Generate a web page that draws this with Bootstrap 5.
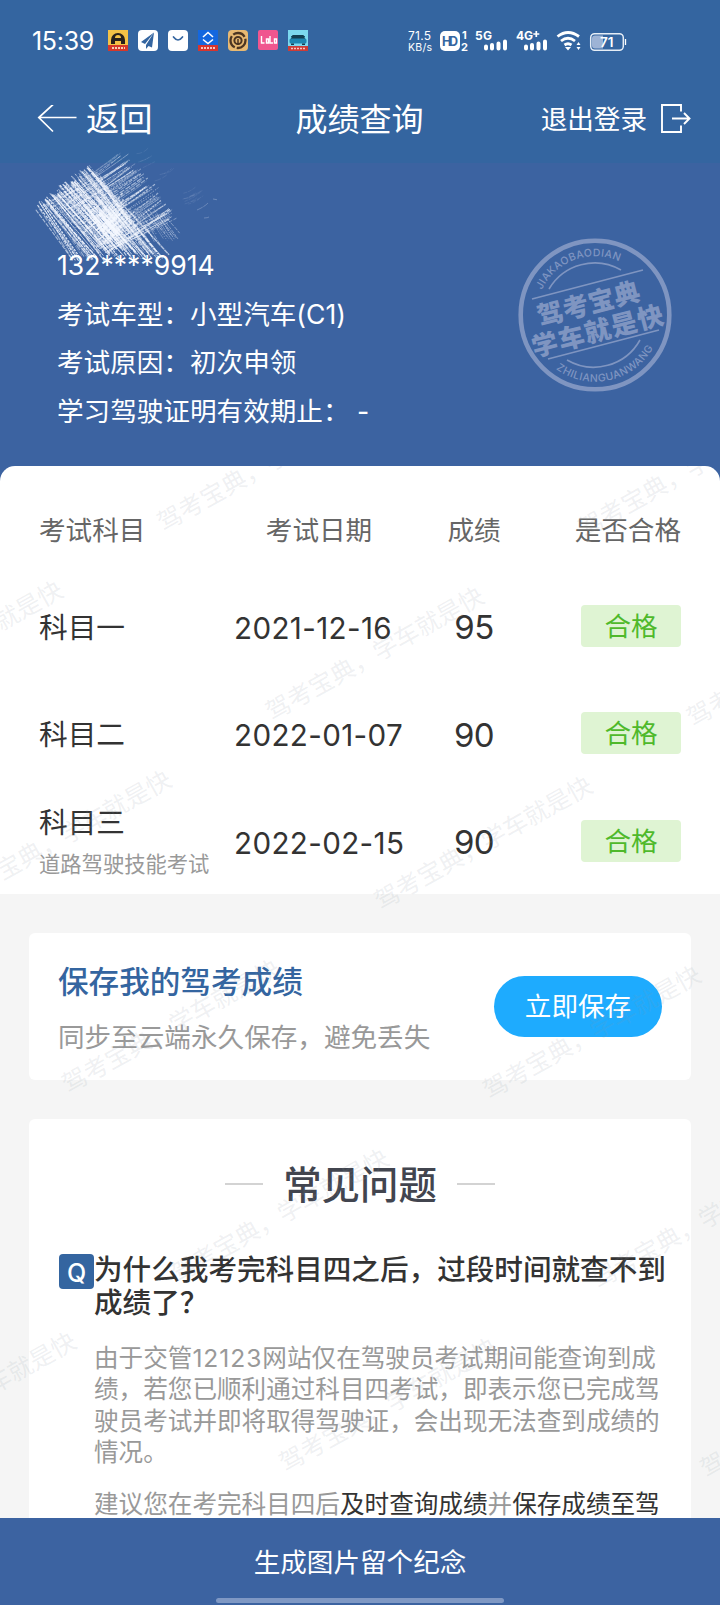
<!DOCTYPE html>
<html lang="zh-CN">
<head>
<meta charset="utf-8">
<meta name="viewport" content="width=device-width, initial-scale=1">
<title>成绩查询</title>
<link rel="stylesheet" href="https://cdn.jsdelivr.net/npm/bootstrap@5.3.0/dist/css/bootstrap.min.css">
<style>
  body { font-family: Inter, "Noto Sans CJK SC", sans-serif; background: #f5f5f5; color: #333; font-size: 26.6px; }
  .phone { width: 720px; height: 1605px; }
  .topbar { background: #3465a0; height: 163px; }
  .status { height: 82px; padding-left: 32px; }
  .clock { font-size: 25px; width: 75px; letter-spacing: -.3px; line-height: 1; }
  .titlebar { height: 76px; padding: 0 29px 0 37px; }
  .back-box, .exit-box { width: 200px; }
  .page-name { width: 254px; padding-right: 9px; }
  .back-label { font-size: 33.3px; margin-left: 9px; }
  .page-name { font-size: 32px; }
  .profile { background: #3c63a1; height: 320px; padding: 78px 57px 0; margin-bottom: -17px; }
  .profile p { line-height: 48.6px; height: 48.6px; }
  .scribble { left: 20px; top: -20px; }
  .stamp { left: 515px; top: 72px; }
  .scores { height: 428px; border-radius: 15px 15px 0 0; padding: 0 39px; }
  .score-row { display: grid; grid-template-columns: 195px 170px 140px 1fr; align-items: center; height: 107.5px; font-size: 28.7px; color: #333; }
  .score-head { height: 107.5px; padding-top: 23px; font-size: 26.6px; color: #666; }
  .score-date { font-size: 29.6px; letter-spacing: .35px; white-space: nowrap; padding-top: 1px; }
  .score-num { font-size: 33px; text-align: center; letter-spacing: -.6px; padding-top: 1px; }
  .sub-note { font-size: 21.3px; color: #999; line-height: 32px; white-space: nowrap; margin-top: 1px; }
  .subject { line-height: 48px; margin-top: -5px; }
  .pass { width: 100px; height: 42px; line-height: 42px; border-radius: 4px; background: #dff4d3; color: #4fb92b; font-size: 26.6px; margin-top: -3px; }
  .panel { background: #fff; margin: 0 29px; border-radius: 6px; }
  .save-panel { margin-top: 39px; height: 147px; padding: 0 29px; }
  .save-title { font-size: 30.6px; color: #3465a0; line-height: 40px; font-weight: 500; margin-top: 6px; }
  .save-note { color: #999; line-height: 40px; margin-top: 15px; }
  .save-btn { width: 168px; height: 61px; border-radius: 31px; background: #1eabfe; color: #fff; font-size: 26.6px; border: 0; padding: 0; }
  .faq { margin-top: 39px; padding: 39px 30px 0 30px; height: 500px; }
  .faq-title { font-size: 38.4px; color: #42454f; font-weight: 500; line-height: 54px; gap: 20px; }
  .faq-title i { width: 38px; height: 2px; background: #d3d3d3; margin-top: -3px; }
  .qa { margin-top: 41px; }
  .q-mark { width: 35px; height: 35px; border-radius: 4px; background: #3465a0; color: #fff; font-size: 25px; font-weight: 500; line-height: 38px; flex: none; margin-top: 1px; }
  .question { font-size: 28.6px; line-height: 33.3px; font-weight: 500; margin-bottom: 23px; white-space: nowrap; }
  .answer { font-size: 24.6px; line-height: 31.6px; color: #999; margin-bottom: 20px; white-space: nowrap; }
  .answer b { font-weight: 400; color: #333; }
  .site-no { letter-spacing: .95px; }
  .bottombar { height: 87px; background: #3c63a1; color: #fff; }
  .bottombar .label-text { line-height: 88px; }
  .home-pill { left: 216px; bottom: 2px; width: 288px; height: 5px; border-radius: 3px; background: #7f98c4; }
  .watermark { left: 0; top: 466px; pointer-events: none; }
</style>
</head>
<body>
<div class="phone position-relative overflow-hidden d-flex flex-column">
  <header class="topbar text-white flex-shrink-0">
    <div class="status d-flex align-items-center">
      <span class="clock flex-shrink-0">15:39</span>
      <svg class="flex-shrink-0" width="610" height="30" viewBox="107 26 610 30" font-family="Inter, sans-serif">
        <g>
          <rect x="108" y="30" width="20" height="21" fill="#f3c246"/><path d="M111 44v-4a7 7 0 0 1 14 0v4h-4v-3h-6v3z" fill="#27211c"/><path d="M115 38a3 3 0 0 1 6 0z" fill="#f3c246"/><rect x="108" y="45" width="20" height="6" fill="#d5382a"/><path d="M112 48h13" stroke="#f6d0b4" stroke-width="2" stroke-dasharray="2 1"/>
          <rect x="138" y="30" width="20" height="21" rx="4" fill="#fff"/><path d="M154 32.500L141 42l4 2zM154 32.500L146 45v4l2.500-3 3.500 1.500z" fill="#3465a0"/>
          <rect x="168" y="30" width="20" height="21" rx="4" fill="#fff"/><path d="M173.500 37q4.500 6 9 0" fill="none" stroke="#3465a0" stroke-width="1.700" stroke-linecap="round"/>
          <rect x="198" y="30" width="20" height="21" fill="#1467df"/><path d="M203 37l5-4.500 5 4.500M203 39.500l5 4 5-4" stroke="#fff" stroke-width="1.600" fill="none"/><rect x="198" y="45" width="20" height="6" fill="#d7352e"/><path d="M201 48h14" stroke="#f8c4bd" stroke-width="2" stroke-dasharray="2 1"/>
          <rect x="228" y="30" width="20" height="21" rx="4" fill="#e8b972"/><circle cx="238" cy="40.500" r="7.500" fill="none" stroke="#4c3522" stroke-width="2.300" stroke-dasharray="13 2"/><circle cx="238" cy="40.500" r="3.600" fill="none" stroke="#4c3522" stroke-width="2"/><path d="M238 39v6" stroke="#4c3522" stroke-width="1.500"/>
          <rect x="258" y="30" width="20" height="20" rx="2" fill="#f0568f"/><path d="M261.500 36v7h3M270 36v7h3M266.500 39v4h2v-4zM274.500 39v4h2v-4z" stroke="#fff" stroke-width="1.400" fill="none"/>
          <rect x="288" y="30" width="20" height="21" fill="#7bd8ee"/><path d="M291 36h14v1h-14z" fill="#1a5e76"/><path d="M292.500 35h11l2 4.500h-15z" fill="#123f52"/><rect x="289.500" y="38.500" width="17" height="5" rx="1.500" fill="#1d86b0"/><path d="M291 43.500h3v1.500h-3zM302 43.500h3v1.500h-3z" fill="#123f52"/><rect x="288" y="46" width="20" height="5" fill="#cd3c36"/><path d="M291 48.500h14" stroke="#f8c4bd" stroke-width="1.500" stroke-dasharray="2 1"/>
        </g>
        <g fill="#fff">
          <text x="408" y="40" font-size="12" textLength="23">71.5</text>
          <text x="408" y="51" font-size="10.500" textLength="24">KB/s</text>
          <rect x="440" y="31" width="20" height="20" rx="5"/>
          <text x="442" y="45.500" font-size="12.500" font-weight="700" fill="#3465a0" textLength="16">HD</text>
          <text x="462" y="39" font-size="11" font-weight="700">1</text>
          <text x="461" y="50.500" font-size="11" font-weight="700">2</text>
          <text x="475" y="40" font-size="12" font-weight="700" textLength="17">5G</text>
          <text x="516" y="40" font-size="12" font-weight="700" textLength="17">4G</text>
          <path d="M536.300 31v6M533.300 34h6" stroke="#fff" stroke-width="1.700"/>
          <path d="M486 46.500v2M492 45v3.500M498.500 43.500v5M505 41.500v7M526 46.500v2M532 45v3.500M538.500 43.500v5M545 41.500v7" stroke="#fff" stroke-width="4" stroke-linecap="round"/>
          <path d="M557.500 36.500q10.500-8 21.500 0M561 41q7-5.500 14 0M564.500 45q3.500-2.500 7 0" fill="none" stroke="#fff" stroke-width="2.800"/>
          <path d="M565 47h6l-3 3.500zM576.500 45l2-3 2 3zM576.500 47h4l-2 3z"/>
          <rect x="590.700" y="33.700" width="32.600" height="16.600" rx="4" fill="none" stroke="#e5edf6" stroke-width="1.500"/>
          <path d="M595 35.500h8v13h-8a3 3 0 0 1-3-3v-7a3 3 0 0 1 3-3z" fill="#9db3d5"/><path d="M625.500 39v6" stroke="#fff" stroke-width="1.300"/>
          <text x="600" y="47" font-size="13.500" font-weight="600" textLength="13.500">71</text>
        </g>
      </svg>
    </div>
    <nav class="titlebar d-flex align-items-center text-nowrap">
      <div class="back-box d-flex align-items-center">
        <svg width="40" height="30" viewBox="0 0 40 30" fill="none" stroke="#fff" stroke-width="1.700"><path d="M39.500 12.500H1.500M16-.500L1.800 12.500 16 26.500"/></svg>
        <span class="back-label">返回</span>
      </div>
      <div class="page-name text-center">成绩查询</div>
      <div class="exit-box d-flex align-items-center justify-content-end">
        <span>退出登录</span>
        <svg class="flex-shrink-0" style="margin-left:14px" width="30" height="32" viewBox="0 0 30 32" fill="none" stroke="#fff" stroke-width="1.900"><path d="M20 7.500V1H1v27h19v-6.500M11 14.500h17.500M23 9l5.500 5.500L23 20"/></svg>
      </div>
    </nav>
  </header>

  <section class="profile position-relative text-white flex-shrink-0">
    <svg class="scribble position-absolute" id="scribble" width="240" height="130" viewBox="20 143 240 130" fill="none" stroke="#f5f8ff"></svg>
    <p class="m-0 position-relative">132****9914</p>
    <p class="m-0">考试车型：小型汽车(C1)</p>
    <p class="m-0">考试原因：初次申领</p>
    <p class="m-0">学习驾驶证明有效期止：&nbsp;-</p>
    <svg class="stamp position-absolute" width="160" height="160" viewBox="-80 -80 160 160">
      <defs>
        <path id="arc-top" d="M-53.200-25A58.800 58.800 0 0 1 36-46.500"/>
        <path id="arc-bottom" d="M-39 54A66.500 66.500 0 0 0 63 22"/>
      </defs>
      <g stroke="#7f95c1" fill="none">
        <circle r="74.300" stroke-width="4.600"/>
        <path stroke-width="1.600" d="M-63-16L48-45M-47 44L64 15M-46-26A53 53 0 0 1 26-45M-28 45A53 53 0 0 0 45 25"/>
      </g>
      <g fill="#7f95c1">
        <text font-size="10.500" font-weight="500" font-family="Inter, sans-serif"><textPath href="#arc-top" textLength="91">JIAKAOBAODIAN</textPath></text>
        <text font-size="10.500" font-weight="500" font-family="Inter, sans-serif"><textPath href="#arc-bottom" textLength="112">ZHILIANGUANWANG</textPath></text>
        <g transform="rotate(-14.500)" font-family="Noto Sans CJK SC, sans-serif" font-weight="900" font-size="26">
          <text x="-56" y="-3" textLength="105">驾考宝典</text>
          <text x="-69" y="25.500" textLength="135">学车就是快</text>
        </g>
      </g>
    </svg>
  </section>

  <section class="scores bg-white position-relative flex-shrink-0">
    <div class="score-row score-head text-nowrap">
      <span>考试科目</span><span class="text-center">考试日期</span><span class="text-center">成绩</span><span class="text-end">是否合格</span>
    </div>
    <div class="score-row">
      <span>科目一</span><span class="score-date">2021-12-16</span><span class="score-num">95</span><span class="pass text-center ms-auto">合格</span>
    </div>
    <div class="score-row">
      <span>科目二</span><span class="score-date">2022-01-07</span><span class="score-num">90</span><span class="pass text-center ms-auto">合格</span>
    </div>
    <div class="score-row">
      <div><div class="subject">科目三</div><div class="sub-note">道路驾驶技能考试</div></div><span class="score-date">2022-02-15</span><span class="score-num">90</span><span class="pass text-center ms-auto">合格</span>
    </div>
  </section>

  <section class="panel save-panel d-flex align-items-center justify-content-between flex-shrink-0">
    <div>
      <div class="save-title">保存我的驾考成绩</div>
      <div class="save-note">同步至云端永久保存，避免丢失</div>
    </div>
    <button class="btn save-btn" type="button">立即保存</button>
  </section>

  <section class="panel faq flex-shrink-0">
    <h2 class="faq-title d-flex align-items-center justify-content-center m-0"><i></i>常见问题<i></i></h2>
    <div class="qa d-flex">
      <span class="q-mark text-center">Q</span>
      <div>
        <div class="question">为什么我考完科目四之后，过段时间就查不到<br>成绩了？</div>
        <p class="answer">由于交管<span class="site-no">12123</span>网站仅在驾驶员考试期间能查询到成<br>绩，若您已顺利通过科目四考试，即表示您已完成驾<br>驶员考试并即将取得驾驶证，会出现无法查到成绩的<br>情况。</p>
        <p class="answer">建议您在考完科目四后<b>及时查询成绩</b>并<b>保存成绩至驾</b></p>
      </div>
    </div>
  </section>

  <svg class="watermark position-absolute" id="watermark" width="720" height="1052" viewBox="0 466 720 1052" fill="#8a96a3" fill-opacity=".14" font-size="24.500" font-family="Noto Sans CJK SC, sans-serif"></svg>

  <footer class="bottombar position-absolute bottom-0 start-0 w-100 text-center">
    <div class="label-text">生成图片留个纪念</div>
    <div class="home-pill position-absolute"></div>
  </footer>
</div>
<script src="https://cdn.jsdelivr.net/npm/bootstrap@5.3.0/dist/js/bootstrap.bundle.min.js"></script>
<script>
  const NS = 'http://www.w3.org/2000/svg';

  // Diagonal watermark lattice
  const wm = document.getElementById('watermark');
  for (let r = -1; r < 6; r++) {
    for (let c = -3; c < 3; c++) {
      const x = 170 + 108.6 * r + 421 * c, y = 518 + 189.3 * r + 6 * c;
      if (x < -200 || x > 720) continue;
      const t = document.createElementNS(NS, 'text');
      t.setAttribute('transform', `translate(${x} ${y}) rotate(-29.3)`);
      t.setAttribute('x', -12.5);
      t.setAttribute('y', 9);
      t.textContent = '驾考宝典，学车就是快';
      wm.appendChild(t);
    }
  }

  // Chalk scribble that hides the name: two crossing hatch directions
  const sc = document.getElementById('scribble');
  let seed = 7;
  const rnd = () => (seed = (seed * 16807) % 2147483647) / 2147483647;
  const line = (x1, y1, x2, y2, w, o) => {
    const p = document.createElementNS(NS, 'path');
    const bx = (x1 + x2) / 2 + rnd() * 3, by = (y1 + y2) / 2 + rnd() * 3;
    p.setAttribute('d', `M${x1.toFixed(1)} ${y1.toFixed(1)}Q${bx.toFixed(1)} ${by.toFixed(1)} ${x2.toFixed(1)} ${y2.toFixed(1)}`);
    p.setAttribute('stroke-width', w.toFixed(2));
    p.setAttribute('stroke-opacity', o.toFixed(2));
    p.setAttribute('stroke-dasharray', `${(1 + rnd() * 6).toFixed(1)} ${(0.4 + rnd() * 1.2).toFixed(1)}`);
    sc.appendChild(p);
  };
  for (let i = 0; i < 84; i++) {
    const k = i / 83, j = () => (rnd() - .5) * 9;
    line(38 + 50 * k + j() * .5, 206 - 37 * k + j(), 74 + 92 * k + j(), 262 - 3 * k + j() - 14 * Math.sin(k * 3.14) * rnd(), .6 + rnd() * .9, .45 + rnd() * .45);
  }
  for (let i = 0; i < 72; i++) {
    const k = i / 71, j = () => (rnd() - .5) * 10;
    line(52 + 58 * k + j(), 200 + 52 * k + j(), 122 + 52 * k + j(), 154 + 62 * k + j(), .5 + rnd() * .8, .3 + rnd() * .4);
  }
  for (let i = 0; i < 95; i++) {
    const a = rnd() * 6.28, m = rnd() * 22, x = 110 + Math.cos(a) * m, y = 222 + Math.sin(a) * m, d = rnd() < .6 ? 1 : -.8;
    line(x - 9, y - 11 * d, x + 9, y + 11 * d, .8 + rnd(), .6);
  }
  for (let i = 0; i < 14; i++) {
    const x = 85 + rnd() * 18, y = 170 + rnd() * 22;
    line(x, y, x + 14, y + 20, 1.1, .5);
  }
  for (let i = 0; i < 18; i++) {
    const x = 146 + i * 1.8, y = 208 + rnd() * 10;
    line(x - 14, y, x + 3, y + 16 + rnd() * 14, .8, .5);
  }
  for (let i = 0; i < 16; i++) {
    const x = 135 + rnd() * 60, y = 152 + (x - 135) * .8 + rnd() * 14;
    line(x, y, x + 12, y - 6, .6, .14);
  }
  line(197, 210, 208, 203, .8, .3); line(213, 199, 217, 200, .8, .35); line(204, 218, 209, 217, .8, .3);
</script>
</body>
</html>
